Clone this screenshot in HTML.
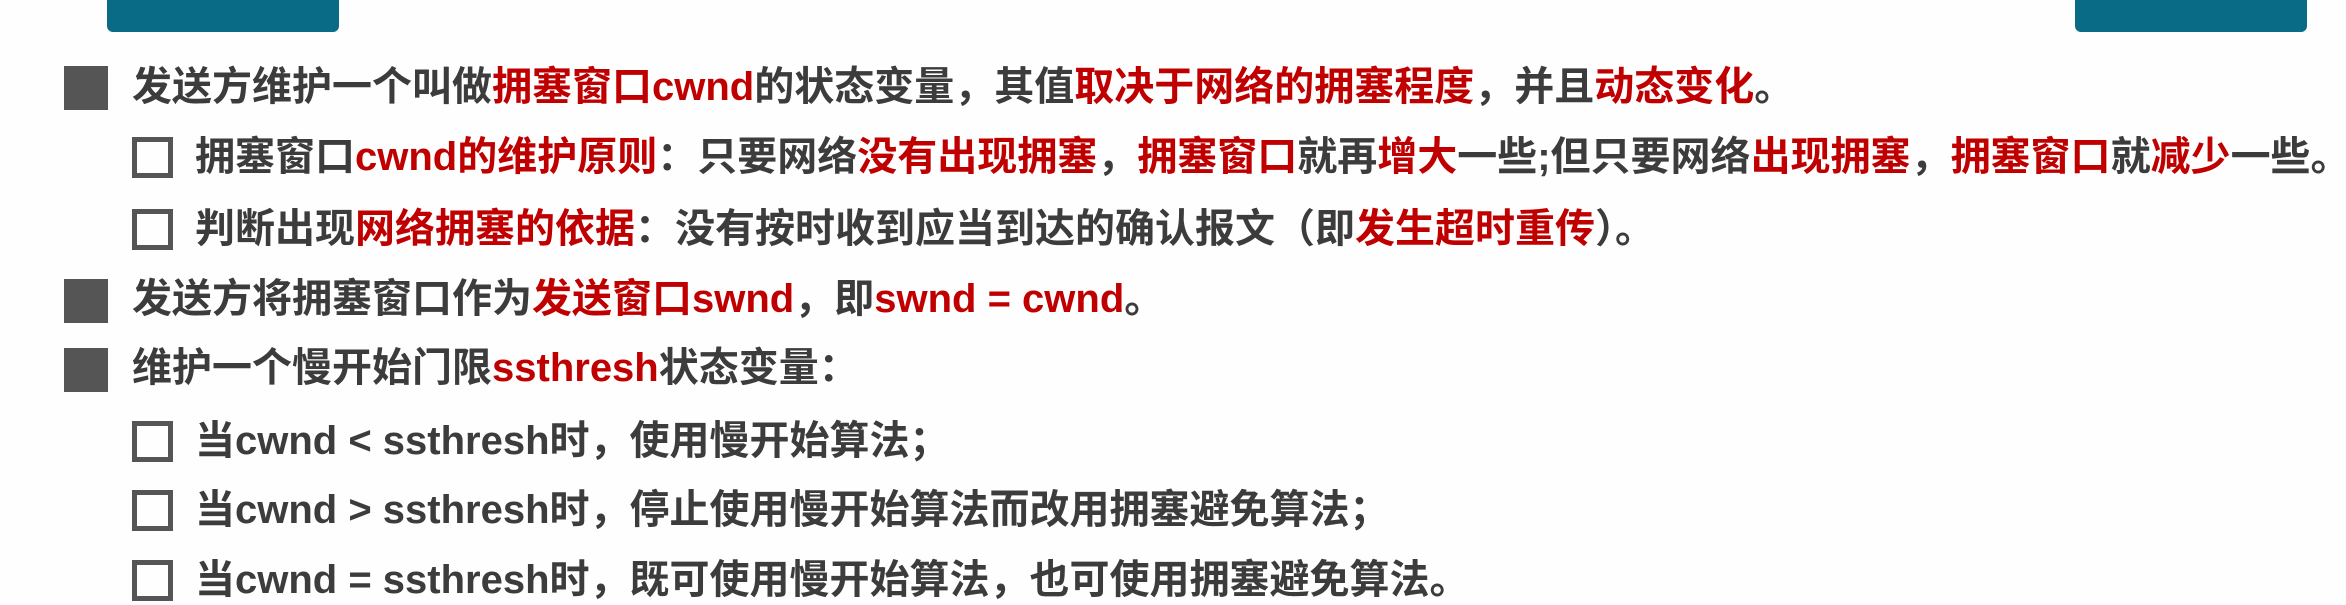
<!DOCTYPE html>
<html><head><meta charset="utf-8"><style>
html,body{margin:0;padding:0;}
body{width:2346px;height:603px;background:#fefefe;position:relative;overflow:hidden;font-family:"Liberation Sans","Noto Sans CJK SC",sans-serif;font-weight:bold;color:#3c3c3c;}
.tb{position:absolute;top:0;height:32px;background:#0a6b86;border-radius:0 0 6px 6px;}
.l{position:absolute;white-space:nowrap;font-size:40px;line-height:50px;}
.r{color:#c00000;}
.b{position:absolute;width:44px;height:44px;background:#555;}
.s{position:absolute;width:31px;height:31px;border:5px solid #555;}
</style></head><body>
<div class="tb" style="left:107px;width:232px"></div>
<div class="tb" style="left:2075px;width:232px"></div>

<div class="b" style="left:64px;top:66px"></div>
<div class="l" style="left:132px;top:62px">发送方维护一个叫做<span class="r">拥塞窗口cwnd</span>的状态变量，其值<span class="r">取决于网络的拥塞程度</span>，并且<span class="r">动态变化</span>。</div>

<div class="s" style="left:132px;top:137px"></div>
<div class="l" style="left:195px;top:132px">拥塞窗口<span class="r">cwnd的维护原则</span>：只要网络<span class="r">没有出现拥塞</span>，<span class="r">拥塞窗口</span>就再<span class="r">增大</span>一些;但只要网络<span class="r">出现拥塞</span>，<span class="r">拥塞窗口</span>就<span class="r">减少</span>一些。</div>

<div class="s" style="left:132px;top:209px"></div>
<div class="l" style="left:195px;top:204px">判断出现<span class="r">网络拥塞的依据</span>：没有按时收到应当到达的确认报文（即<span class="r">发生超时重传</span>）。</div>

<div class="b" style="left:64px;top:279px"></div>
<div class="l" style="left:132px;top:274px">发送方将拥塞窗口作为<span class="r">发送窗口swnd</span>，即<span class="r">swnd = cwnd</span>。</div>

<div class="b" style="left:64px;top:348px"></div>
<div class="l" style="left:132px;top:343px">维护一个慢开始门限<span class="r">ssthresh</span>状态变量：</div>

<div class="s" style="left:132px;top:421px"></div>
<div class="l" style="left:195px;top:416px">当cwnd &lt; ssthresh时，使用慢开始算法；</div>

<div class="s" style="left:132px;top:490px"></div>
<div class="l" style="left:195px;top:485px">当cwnd &gt; ssthresh时，停止使用慢开始算法而改用拥塞避免算法；</div>

<div class="s" style="left:132px;top:560px"></div>
<div class="l" style="left:195px;top:555px">当cwnd = ssthresh时，既可使用慢开始算法，也可使用拥塞避免算法。</div>
</body></html>
